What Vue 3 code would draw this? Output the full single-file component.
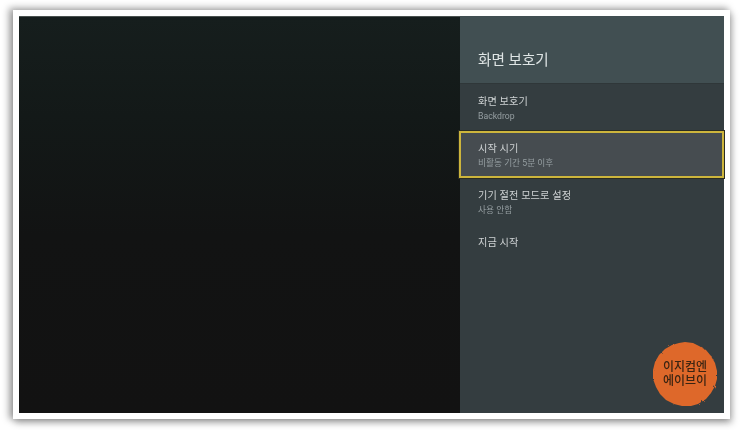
<script setup>
const items = [
  { title: '화면 보호기', sub: 'Backdrop' },
  { title: '시작 시기', sub: '비활동 기간 5분 이후', active: true },
  { title: '기기 절전 모드로 설정', sub: '사용 안함' },
  { title: '지금 시작' },
]
</script>

<template>
  <div class="page">
    <div class="frame">
      <div class="screen">
        <div class="left"></div>
        <aside class="panel">
          <header class="head">화면 보호기</header>
          <ul class="list">
            <li v-for="it in items" :key="it.title" class="row" :class="{ active: it.active }">
              <div class="title">{{ it.title }}</div>
              <div v-if="it.sub" class="sub">{{ it.sub }}</div>
            </li>
          </ul>
          <div class="badge">
            <svg class="blob" viewBox="0 0 66 66" width="66" height="66">
              <defs>
                <filter id="rough" x="-10%" y="-10%" width="120%" height="120%">
                  <feTurbulence type="fractalNoise" baseFrequency="0.35" numOctaves="2" seed="4" />
                  <feDisplacementMap in="SourceGraphic" scale="2.5" />
                </filter>
              </defs>
              <path filter="url(#rough)" d="M33 1 L41 2 L47 5 L54 9 L59 15 L63 22 L65 30 L65 38 L63 45 L59 52 L54 58 L46 63 L39 65 L30 65 L22 63 L14 59 L8 53 L4 46 L1 38 L1 29 L3 21 L7 14 L13 8 L20 4 L27 2 Z" fill="#de682a" />
            </svg>
            <div class="badge-text">
              <div class="badge-line">이지컴엔</div>
              <div class="badge-line">에이브이</div>
            </div>
          </div>
        </aside>
      </div>
    </div>
  </div>
</template>

<style scoped>
.page {
  width: 743px;
  height: 430px;
  padding: 10px 13px 11px;
  box-sizing: border-box;
  background: #fff;
  overflow: hidden;
  font-family: Roboto, "Noto Sans CJK KR", sans-serif;
}
.frame {
  width: 717px;
  height: 409px;
  padding: 6px;
  box-sizing: border-box;
  background: #fff;
  box-shadow: -3px -1px 7px 1px rgba(0, 0, 0, 0.36), 2px 4px 7px 0 rgba(0, 0, 0, 0.28);
}
.screen {
  display: flex;
  height: 397px;
  width: 705px;
}
.left {
  width: 441px;
  background: linear-gradient(180deg, #161e1d 0%, #131918 25%, #121313 55%, #121212 100%);
  border-top: 1px solid #4a5250;
  box-sizing: border-box;
}
.panel {
  position: relative;
  width: 264px;
  background: #343d40;
  color: #e4e7e8;
}
.head {
  height: 68px;
  box-sizing: border-box;
  padding: 32px 0 0 18px;
  background: #414f52;
  border-bottom: 1px solid #2f3739;
  font-size: 14.6px;
  line-height: 24px;
  color: #dfe5e5;
  filter: blur(0.25px);
}
.list {
  list-style: none;
  margin: 0;
  padding: 0;
}
.row {
  height: 47px;
  box-sizing: border-box;
  padding: 10px 0 0 18px;
}
.row.active {
  position: relative;
  margin-left: -1px;
  padding-left: 19px;
  background: #464c50;
  outline: 2px solid #cdb53c;
  outline-offset: -2px;
  box-shadow: 0 0 0 1px #2a2c22;
}
.title {
  font-size: 10.2px;
  line-height: 15px;
  letter-spacing: 0.1px;
  color: #cfd3d4;
  filter: blur(0.25px);
}
.sub {
  font-size: 8.7px;
  line-height: 13px;
  margin-top: 1px;
  color: #969fa2;
  filter: blur(0.25px);
}
.badge {
  position: absolute;
  left: 192px;
  top: 325px;
  width: 66px;
  height: 66px;
}
.blob {
  display: block;
}
.badge-text {
  position: absolute;
  inset: 19px 0 auto;
  text-align: center;
  font-size: 12px;
  font-weight: 500;
  color: #3a2412;
  filter: blur(0.25px);
}
.badge-line {
  height: 14px;
  line-height: 14px;
  overflow: hidden;
}
</style>
